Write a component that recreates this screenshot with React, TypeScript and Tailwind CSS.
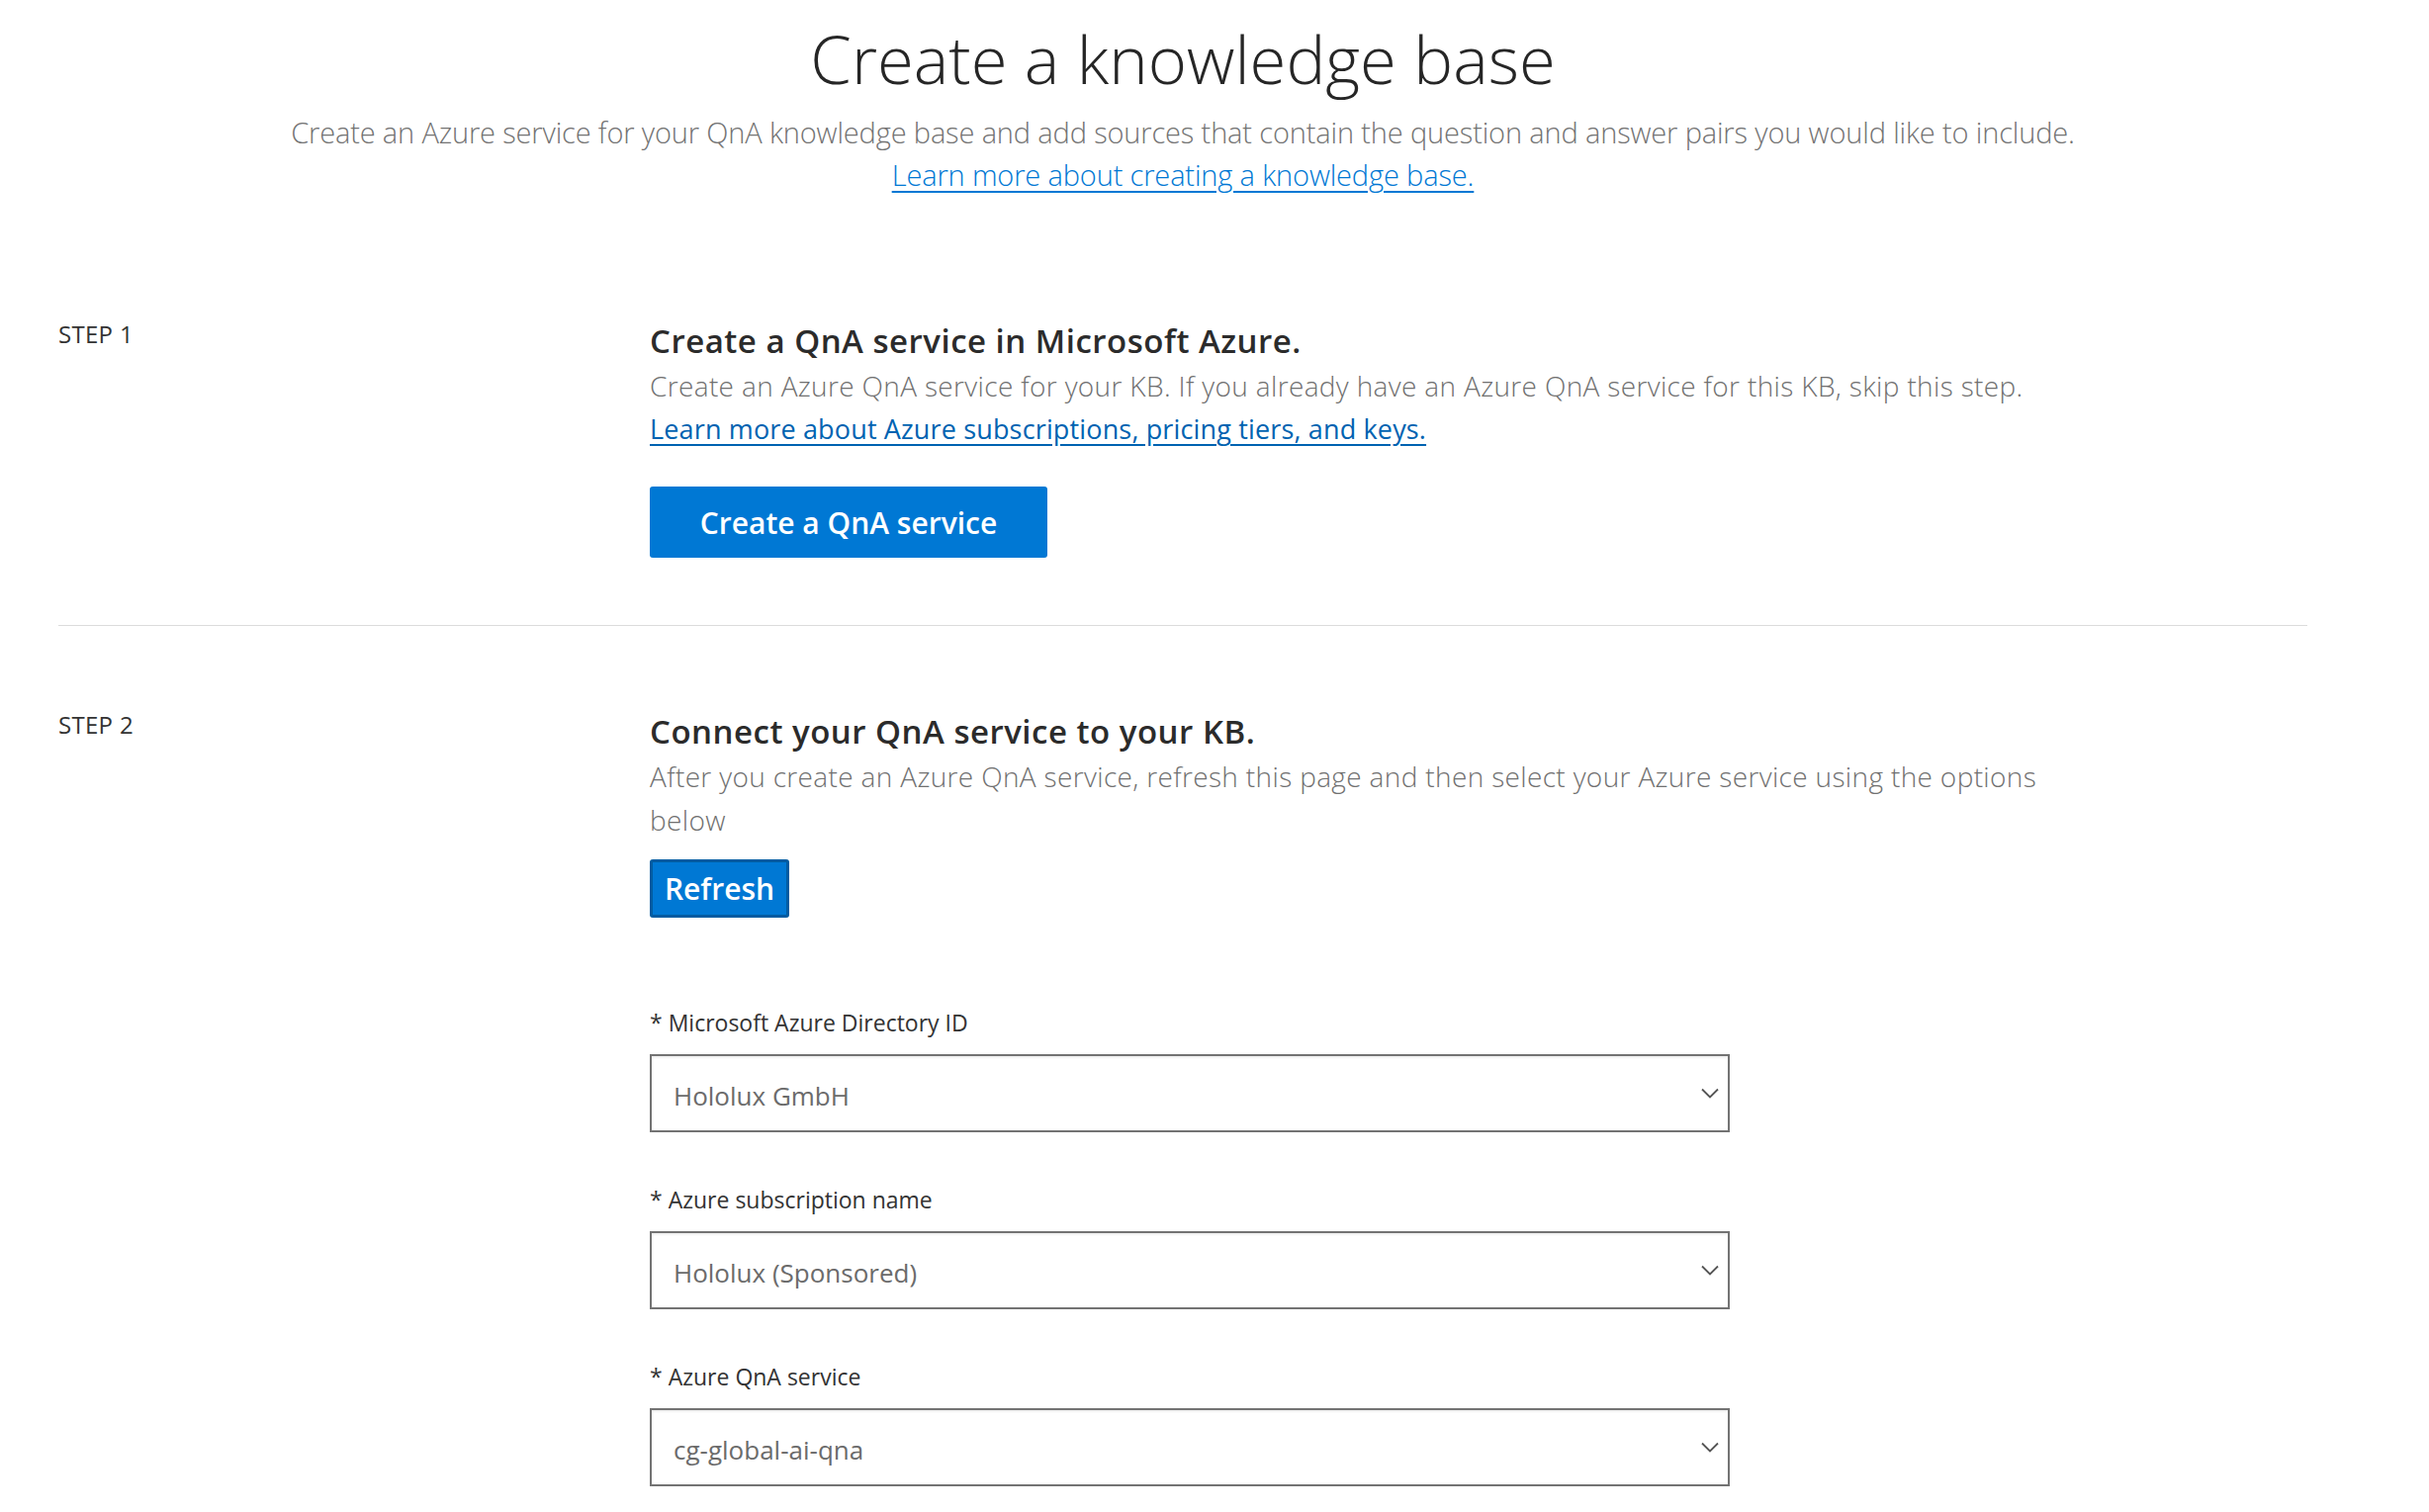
type Field = {
  label: string
  value: string
}

const fields: Field[] = [
  { label: 'Microsoft Azure Directory ID', value: 'Hololux GmbH' },
  { label: 'Azure subscription name', value: 'Hololux (Sponsored)' },
  { label: 'Azure QnA service', value: 'cg-global-ai-qna' },
]

function StepLabel({ children }: { children: string }) {
  return (
    <div className="w-[598px] shrink-0 text-[24px] leading-[30px] mt-[1px] tracking-[0.3px] text-[#333]">{children}</div>
  )
}

function Select({ field }: { field: Field }) {
  return (
    <div>
      <label className="block text-[23px] leading-[30px] text-[#333]">* {field.label}</label>
      <div className="mt-[17px] w-[1092px] h-[79px] border-2 border-[#737373] shadow-[inset_0_2px_2px_rgba(0,0,0,0.06)] flex items-center justify-between pl-[22px] pr-[8px]">
        <span className="pt-[4px] text-[26px] leading-[34px] text-[#6b6b6b]">{field.value}</span>
        <svg width="18" height="11" viewBox="0 0 18 11" fill="none" className="mr-[1px]">
          <path d="M1 1.5 9 9.5 17 1.5" stroke="#555" strokeWidth="1.8" />
        </svg>
      </div>
    </div>
  )
}

export default function App() {
  return (
    <div className="min-h-screen bg-white pb-10 font-['Open_Sans','Noto_Sans',sans-serif]">
      <div className="w-[2274px] ml-[59px]">
        <header className="pt-[19px] text-center">
          <h1 className="text-[67px] leading-[80px] font-light text-[#262626]">Create a knowledge base</h1>
          <p className="mt-[13px] text-[29px] leading-[43px] font-light tracking-[-0.15px] text-[#737373]">
            Create an Azure service for your QnA knowledge base and add sources that contain the question and answer pairs you would like to include.
          </p>
          <a href="#" className="text-[29px] leading-[43px] font-light tracking-[-0.15px] text-[#0078d4] underline underline-offset-[5px]">
            Learn more about creating a knowledge base.
          </a>
        </header>

        <section className="mt-[124px] flex">
          <StepLabel>STEP 1</StepLabel>
          <div className="w-[1430px]">
            <h2 className="text-[33px] leading-[46px] font-semibold tracking-[0.5px] text-[#2b2b2b]">Create a QnA service in Microsoft Azure.</h2>
            <p className="text-[28px] leading-[44px] font-light tracking-[0.35px] text-[#707070]">
              Create an Azure QnA service for your KB. If you already have an Azure QnA service for this KB, skip this step.
            </p>
            <a href="#" className="block w-fit text-[27px] leading-[44px] tracking-[0.15px] text-[#0063b1] underline underline-offset-[5px]">
              Learn more about Azure subscriptions, pricing tiers, and keys.
            </a>
            <button className="mt-[36px] w-[402px] h-[72px] rounded-[3px] bg-[#0078d4] text-white text-[30px] font-semibold">
              Create a QnA service
            </button>
          </div>
        </section>

        <div className="mt-[68px] h-px bg-[#dcdcdc]" />

        <section className="mt-[84px] flex">
          <StepLabel>STEP 2</StepLabel>
          <div className="w-[1430px]">
            <h2 className="text-[33px] leading-[46px] font-semibold tracking-[0.5px] text-[#2b2b2b]">Connect your QnA service to your KB.</h2>
            <p className="text-[28px] leading-[44px] font-light tracking-[0.35px] text-[#707070]">
              After you create an Azure QnA service, refresh this page and then select your Azure service using the options below
            </p>
            <button className="mt-[18px] w-[141px] h-[59px] rounded-[3px] border-[3px] border-[#005ba1] bg-[#0078d4] text-white text-[30px] font-semibold">
              Refresh
            </button>

            <div className="mt-[91px] flex flex-col gap-[53px]">
              {fields.map(f => (
                <Select key={f.label} field={f} />
              ))}
            </div>
          </div>
        </section>
      </div>
    </div>
  )
}
